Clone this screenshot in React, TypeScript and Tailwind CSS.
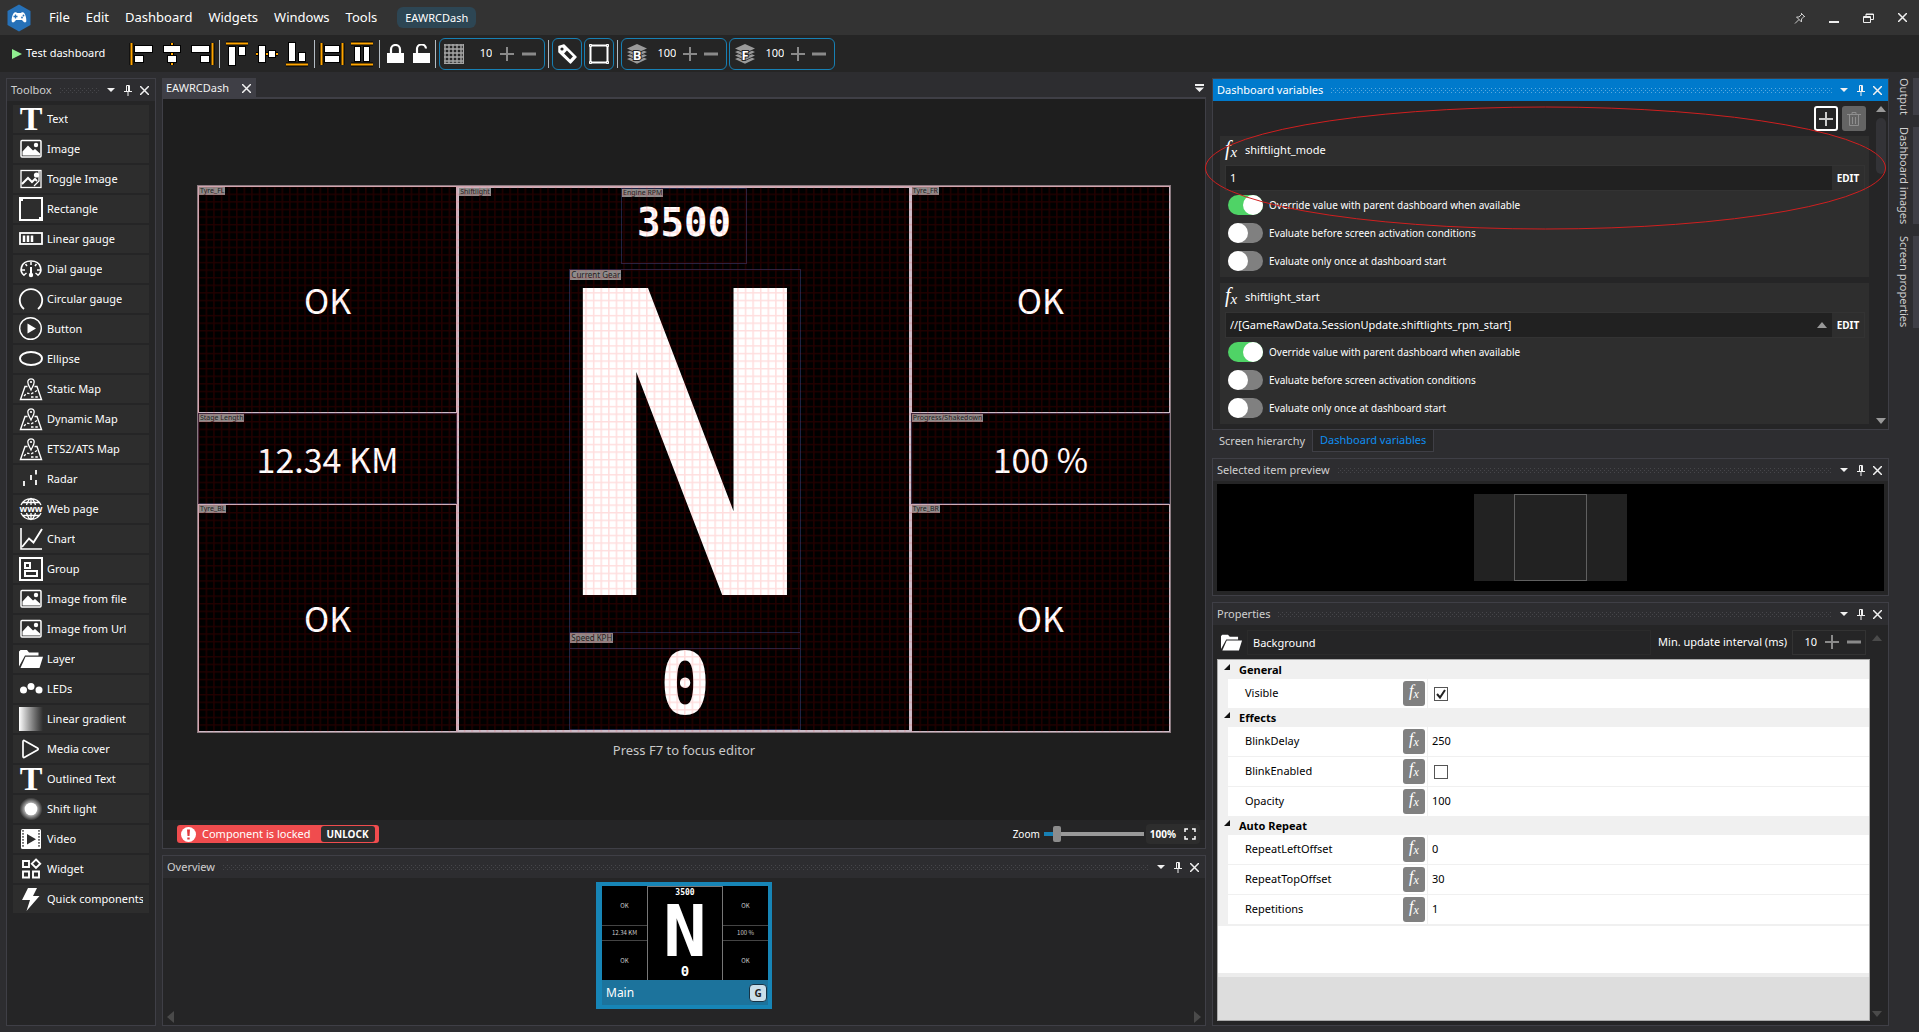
import { Fragment, ReactNode } from "react";
import clsx from "clsx";

interface IToolboxItem {
    name: string;
    icon: ReactNode;
}

interface IVariable {
    name: string;
    value: string;
    expandable?: boolean;
}

interface IProperty {
    name: string;
    value: string | boolean;
}

const MONO = "font-['DejaVu_Sans_Mono',monospace] font-bold";
const GOTHIC = "font-['Noto_Sans_CJK_JP',sans-serif]";

/* ---------- icons ---------- */

function Icon({ children, size = 24 }: { children: ReactNode; size?: number }) {
    return (
        <svg width={size} height={size} viewBox="0 0 24 24" fill="none" stroke="white" strokeWidth="2" className="shrink-0 overflow-visible" aria-hidden="true">
            {children}
        </svg>
    );
}

const LetterT = () => (
    <span className="flex size-6 shrink-0 items-center justify-center font-['Liberation_Serif',serif] text-[34px] leading-none font-bold" aria-hidden="true">T</span>
);

const ImageIcon = () => (
    <Icon>
        <rect x="2" y="3.5" width="20" height="16.5" rx="1" strokeWidth="1.5" />
        <circle cx="17" cy="8" r="2.2" fill="white" stroke="none" />
        <path d="M3.5 18.5v-4l5.5-6 5 5 2-1.5 5 4.500v2z" fill="white" stroke="none" />
    </Icon>
);

const ToggleImageIcon = () => (
    <Icon>
        <rect x="2" y="3.5" width="20" height="17" strokeWidth="1.3" />
        <circle cx="17.500" cy="8" r="2.600" fill="white" stroke="none" />
        <path d="M3 17l6-6 4 4 3-3 2 2" strokeWidth="2" />
        <path d="M20 4v10l-5 5" strokeWidth="1.300" />
    </Icon>
);

const MapIcon = () => (
    <Icon>
        <path d="M8.500 9.500H6L1.500 22.500h21L18 9.500h-2.500" strokeWidth="1.400" />
        <path d="M12 13C10 9 8.800 7.500 8.800 5a3.200 3.200 0 0 1 6.400 0c0 2.500-1.200 4-3.200 8z" strokeWidth="1.300" />
        <circle cx="12" cy="5" r="1.100" fill="white" stroke="none" />
        <path d="M5 19l3-3 4 1 7-4M12 20h7" strokeWidth="1.300" strokeDasharray="2.500 1.800" />
    </Icon>
);

const FolderIcon = ({ size = 24 }: { size?: number }) => (
    <Icon size={size}>
        <path d="M0 19.500V4.500L1.500 3H8l2 2.500h9.500V8.500H6z" fill="white" stroke="none" />
        <path d="M6.500 9.800H24L20.500 21H1.500z" fill="white" stroke="none" />
    </Icon>
);

const toolboxItems: IToolboxItem[] = [
    { name: "Text", icon: <LetterT /> },
    { name: "Image", icon: <ImageIcon /> },
    { name: "Toggle Image", icon: <ToggleImageIcon /> },
    {
        name: "Rectangle",
        icon: <Icon><rect x="1" y="1" width="22" height="22" /><path d="M2 2h2v2H2zM20 20h2v2h-2z" fill="white" stroke="none" /></Icon>,
    },
    {
        name: "Linear gauge",
        icon: <Icon><rect x="1" y="6" width="22" height="11" strokeWidth="1.800" /><path d="M5 8.500v6.500M9 8.500v6.500M13 8.500v6.500" strokeWidth="2.500" /></Icon>,
    },
    {
        name: "Dial gauge",
        icon: (
            <Icon>
                <path d="M5.500 18.500C0 15 1 4 12 4s12 11 6.500 14.500" strokeWidth="1.700" />
                <path d="M12 5v3M6.500 7l1.500 2M17.500 7L16 9M3 13h3M18 13h3M5 18l2.500-2M19 18l-2.500-2" strokeWidth="1.500" />
                <path d="M12 10v8" strokeWidth="2" />
                <circle cx="12" cy="18" r="2.200" fill="white" stroke="none" />
            </Icon>
        ),
    },
    { name: "Circular gauge", icon: <Icon><path d="M5 22A11.200 11.200 0 1 1 19 22" strokeWidth="1.800" /></Icon> },
    {
        name: "Button",
        icon: <Icon><circle cx="11.500" cy="11.500" r="10.800" strokeWidth="1.400" /><path d="M8.500 6.500l8.500 5-8.500 5z" fill="white" stroke="none" /></Icon>,
    },
    { name: "Ellipse", icon: <Icon><ellipse cx="12" cy="11.500" rx="11" ry="6.500" strokeWidth="1.900" /></Icon> },
    { name: "Static Map", icon: <MapIcon /> },
    { name: "Dynamic Map", icon: <MapIcon /> },
    { name: "ETS2/ATS Map", icon: <MapIcon /> },
    { name: "Radar", icon: <Icon><path d="M5 14v5M12 8v5M17 3v4.500M17 13v5" strokeWidth="1.800" /></Icon> },
    {
        name: "Web page",
        icon: (
            <Icon>
                <path d="M2 8A11 11 0 0 1 22 8M2 16a11 11 0 0 0 20 0M7.500 8C9 3.500 10.500 1.500 12 1.500S15 3.500 16.500 8M7.500 16c1.500 4.500 3 6.500 4.500 6.500s3-2 4.500-6.500M12 1.500V8M12 16v6.500M4 5.500h16M4 18.500h16" strokeWidth="1.300" />
                <text x="12" y="15" textAnchor="middle" fill="white" stroke="none" className="text-[9px] font-bold">www</text>
            </Icon>
        ),
    },
    { name: "Chart", icon: <Icon><path d="M2 1v21h21" strokeWidth="1.600" /><path d="M3 20l7-8.500 4.500 4L23 2" strokeWidth="1.900" /></Icon> },
    {
        name: "Group",
        icon: <Icon><rect x="1" y="1" width="22" height="22" /><rect x="6" y="6" width="5" height="5" /><rect x="6" y="14" width="12" height="5" /></Icon>,
    },
    { name: "Image from file", icon: <ImageIcon /> },
    { name: "Image from Url", icon: <ImageIcon /> },
    { name: "Layer", icon: <FolderIcon /> },
    {
        name: "LEDs",
        icon: <Icon><g fill="white" stroke="none"><circle cx="4.500" cy="13" r="3.500" /><circle cx="12" cy="9.500" r="3.500" /><circle cx="20" cy="13" r="3.500" /></g></Icon>,
    },
    { name: "Linear gradient", icon: <div className="size-6 shrink-0 bg-linear-to-r from-white to-[#2d2d2d]" /> },
    { name: "Media cover", icon: <Icon><path d="M4 4.500v15c0 1 .8 1.300 1.600.8L18.500 13c.9-.5.9-1.500 0-2L5.600 3.700C4.800 3.200 4 3.500 4 4.500z" strokeWidth="1.700" /></Icon> },
    { name: "Outlined Text", icon: <LetterT /> },
    {
        name: "Shift light",
        icon: (
            <Icon>
                <defs>
                    <radialGradient id="shift-glow">
                        <stop offset="0.5" stopColor="#bbb" />
                        <stop offset="1" stopColor="#2d2d2d" />
                    </radialGradient>
                </defs>
                <circle cx="12" cy="12" r="11.500" fill="url(#shift-glow)" stroke="none" />
                <circle cx="12" cy="12" r="6.300" fill="white" stroke="none" />
            </Icon>
        ),
    },
    {
        name: "Video",
        icon: (
            <Icon>
                <rect x="2" y="2" width="20" height="20" rx="1.500" fill="white" stroke="none" />
                <path d="M4 3v18M20 3v18" stroke="#2d2d2d" strokeWidth="1.300" strokeDasharray="1.700 1.300" />
                <path d="M8 7v10.500l9-5.200z" fill="#2d2d2d" stroke="none" />
            </Icon>
        ),
    },
    {
        name: "Widget",
        icon: <Icon><path d="M4 4h6v6H4zM4 14.500h6v6H4zM14 14.500h6v6h-6zM17 2.500l4.200 4.200L17 11l-4.200-4.300z" strokeWidth="1.900" /></Icon>,
    },
    { name: "Quick components", icon: <Icon><path d="M9 1h9l-4 8h6.500L7.500 24l3.500-11H3z" fill="white" stroke="none" /></Icon> },
];

const variables: IVariable[] = [
    { name: "shiftlight_mode", value: "1" },
    { name: "shiftlight_start", value: "//[GameRawData.SessionUpdate.shiftlights_rpm_start]", expandable: true },
];

const variableOptions = [
    "Override value with parent dashboard when available",
    "Evaluate before screen activation conditions",
    "Evaluate only once at dashboard start",
];

const propertyGroups: { category: string; items: IProperty[] }[] = [
    { category: "General", items: [{ name: "Visible", value: true }] },
    {
        category: "Effects",
        items: [
            { name: "BlinkDelay", value: "250" },
            { name: "BlinkEnabled", value: false },
            { name: "Opacity", value: "100" },
        ],
    },
    {
        category: "Auto Repeat",
        items: [
            { name: "RepeatLeftOffset", value: "0" },
            { name: "RepeatTopOffset", value: "30" },
            { name: "Repetitions", value: "1" },
        ],
    },
];

function FxGlyph({ className }: { className?: string }) {
    return (
        <span className={clsx("font-['Liberation_Serif',serif] italic leading-none whitespace-nowrap", className)}>
            f<span className="relative top-[2px] text-[75%]">x</span>
        </span>
    );
}

function Grip({ className }: { className?: string }) {
    return (
        <svg className={clsx("h-[5px] min-w-0 flex-1", className)} aria-hidden="true">
            <line x1="0" y1="0.5" x2="100%" y2="0.5" stroke="currentColor" strokeDasharray="1 3" />
            <line x1="2" y1="2.5" x2="100%" y2="2.5" stroke="currentColor" strokeDasharray="1 3" />
            <line x1="0" y1="4.5" x2="100%" y2="4.5" stroke="currentColor" strokeDasharray="1 3" />
        </svg>
    );
}

function CloseGlyph() {
    return <svg width="9" height="9" stroke="#f1f1f1" strokeWidth="1.500"><path d="M0 0l9 9M9 0L0 9" /></svg>;
}

function PanelHeader({ title, active }: { title: string; active?: boolean }) {
    return (
        <div className={clsx("flex h-[22px] shrink-0 items-center pr-[3px] pl-1", active ? "bg-[#007acc] text-white" : "bg-[#2d2d30] text-[#d0d0d0]")}>
            <h2 className="mr-2 text-[11px] leading-4 whitespace-nowrap">{title}</h2>
            <Grip className={active ? "text-[#59a8de]" : "text-[#46464a]"} />
            <button aria-label="Window position" className="ml-1 flex w-4 justify-center">
                <svg width="8" height="4"><path d="M0 0h8L4 4z" fill="#f1f1f1" /></svg>
            </button>
            <button aria-label="Auto hide" className="flex w-[18px] justify-center">
                <svg width="8" height="11" fill="none" stroke="#f1f1f1"><path d="M2.500 6V.5h3V6M0 6.500h8M4.500 1v5M4 7v4" /></svg>
            </button>
            <button aria-label="Close" className="flex w-[15px] justify-center">
                <CloseGlyph />
            </button>
        </div>
    );
}

/* ---------- title bar and toolbar ---------- */

function TitleBar() {
    return (
        <header className="flex h-[35px] shrink-0 items-center bg-[#333333] pl-[7px]">
            <svg width="24" height="28" viewBox="0 0 24 28" aria-hidden="true">
                <path d="M12 0.500L23.500 7v14L12 27.500 0.500 21V7z" fill="#2671b8" />
                <path d="M7.500 8.500c1-.6 2-.4 2.800.5h3.400c.8-.9 1.800-1.100 2.800-.5 1.700 1 3 5.500 2.800 8.500-.1 2-2.200 1.800-3.300.3l-1-1.300H9l-1 1.300c-1.100 1.500-3.200 1.700-3.300-.3-.2-3 1.100-7.500 2.800-8.500z" fill="white" />
                <path d="M8.500 10.500v4M6.500 12.500h4" stroke="#2671b8" strokeWidth="1.300" />
                <circle cx="15" cy="13.500" r="0.900" fill="#2671b8" />
                <circle cx="16.500" cy="11.500" r="0.900" fill="#2671b8" />
            </svg>
            <nav className="ml-[18px] flex items-center gap-4 text-[13px] text-white">
                {["File", "Edit", "Dashboard", "Widgets", "Windows", "Tools"].map((item) => (
                    <button key={item}>{item}</button>
                ))}
            </nav>
            <span className="ml-5 rounded-md bg-[#2d4654] px-2 py-[2px] text-[11px] leading-[17px] text-white">EAWRCDash</span>
            <div className="ml-auto flex items-center">
                <button aria-label="Pin window" className="flex w-[34px] justify-center">
                    <svg width="12" height="12" fill="none" stroke="#ccc"><path d="M7 1l4 4M8 2L5 5H2.500l5 5V7l3-3M5 7.500L1 11.500" /></svg>
                </button>
                <button aria-label="Minimize" className="flex w-[34px] justify-center">
                    <svg width="10" height="10"><path d="M0 8h10v2H0z" fill="#eee" /></svg>
                </button>
                <button aria-label="Restore" className="flex w-[34px] justify-center">
                    <svg width="11" height="10" fill="none" stroke="#eee"><path d="M3 3V1h7.500v5.500H8M.5 3.500h7v6h-7zM3 1.500h7M.5 4.500h7" /></svg>
                </button>
                <button aria-label="Close window" className="flex w-[34px] justify-center"><CloseGlyph /></button>
            </div>
        </header>
    );
}

function AlignIcon({ guides, blocks }: { guides: string; blocks: string }) {
    return (
        <svg width="26" height="26" viewBox="0 0 26 26" aria-hidden="true">
            <path d={guides} stroke="black" strokeWidth="4" />
            <path d={guides} stroke="#ffa500" strokeWidth="2" />
            <path d={blocks} fill="white" stroke="black" strokeWidth="2" paintOrder="stroke" />
        </svg>
    );
}

const alignGroups = [
    [
        { label: "Align left", guides: "M2.500 2v22", blocks: "M6 5h17v6H6zM6 15h8v6H6z" },
        { label: "Align center", guides: "M13 2v22", blocks: "M5 5h16v6H5zM9 15h8v6H9z" },
        { label: "Align right", guides: "M23.500 2v22", blocks: "M3 5h17v6H3zM12 15h8v6h-8z" },
    ],
    [
        { label: "Align top", guides: "M2 2.500h22", blocks: "M5 6h6v18H5zM15 6h6v8h-6z" },
        { label: "Align middle", guides: "M2 13h22", blocks: "M5 5h6v16H5zM15 10h6v6h-6z" },
        { label: "Align bottom", guides: "M2 23.500h22", blocks: "M5 2h6v18H5zM15 12h6v8h-6z" },
    ],
    [
        { label: "Distribute horizontally", guides: "M2.500 2v22M23.500 2v22", blocks: "M6 5h14v6H6zM6 15h14v6H6z" },
        { label: "Distribute vertically", guides: "M2 2.500h22M2 23.500h22", blocks: "M6 6h5v14H6zM15 6h5v14h-5z" },
    ],
];

function Separator() {
    return <div className="h-7 w-px shrink-0 bg-[#b4bcc4]" />;
}

function Stepper({ value, label, tight }: { value: string; label: string; tight?: boolean }) {
    return (
        <div className={clsx("flex items-center", tight ? "gap-2" : "gap-[7px]")}>
            <input aria-label={label} defaultValue={value} className="w-[22px] bg-transparent text-right text-[11px] text-white outline-none" />
            <button aria-label={`Increase ${label}`}>
                <svg width="14" height="14"><path d="M7 0v14M0 7h14" stroke="#8a8a8a" strokeWidth="2" /></svg>
            </button>
            <button aria-label={`Decrease ${label}`}>
                <svg width="14" height="14"><path d="M0 7h14" stroke="#8a8a8a" strokeWidth="3" /></svg>
            </button>
        </div>
    );
}

function LayersIcon({ letter }: { letter: string }) {
    return (
        <svg width="22" height="22" viewBox="0 0 22 22" fill="#9a9a9a" aria-hidden="true">
            <path d="M11 1l10 4.500L11 10 1 5.500z" />
            <path d="M1 9l3-1.200 7 3.200 7-3.200L21 9l-10 4.800zM1 12.500l3-1.200 7 3.200 7-3.200 3 1.200-10 4.800zM1 16l3-1.200 7 3.200 7-3.200 3 1.200-10 4.800z" />
            <text x="11" y="17" textAnchor="middle" fill="white" stroke="#252526" strokeWidth="2" paintOrder="stroke" className="text-[13px] font-bold">{letter}</text>
        </svg>
    );
}

function Toolbar() {
    const group = "flex h-8 items-center rounded-md border border-[#1780b4]";
    return (
        <div className="flex h-[37px] shrink-0 items-center bg-[#252525] pl-3">
            <button className="mr-5 flex items-center gap-1 text-[11px] whitespace-nowrap text-white">
                <svg width="10" height="10"><path d="M0 0l10 5-10 5z" fill="#90ee90" /></svg>
                Test dashboard
            </button>
            {alignGroups.map((buttons, idx) => (
                <Fragment key={`align-${idx}`}>
                    <div className="flex gap-1 px-1">
                        {buttons.map((button) => (
                            <button key={button.label} aria-label={button.label}>
                                <AlignIcon guides={button.guides} blocks={button.blocks} />
                            </button>
                        ))}
                    </div>
                    <Separator />
                </Fragment>
            ))}
            <div className="flex gap-[9px] pr-[5px] pl-[7px]">
                <button aria-label="Lock">
                    <svg width="17" height="20"><path d="M4 9V5.500a4.500 4.500 0 0 1 9 0V9" fill="none" stroke="white" strokeWidth="2.200" /><path d="M0 9h17v10H0z" fill="white" /></svg>
                </button>
                <button aria-label="Unlock">
                    <svg width="17" height="20"><path d="M4 9V5.500a4.500 4.500 0 0 1 9-1" fill="none" stroke="white" strokeWidth="2.200" /><path d="M0 9h17v10H0z" fill="white" /></svg>
                </button>
            </div>
            <Separator />
            <div className={clsx(group, "mr-[3px] ml-[3px] gap-[6px] pr-2 pl-1")}>
                <svg width="20" height="20" aria-hidden="true">
                    <path d="M0 1h20M0 5h20M0 9h20M0 13h20M0 17h20M1 0v20M5 0v20M9 0v20M13 0v20M17 0v20M19.500 0v20M0 19.500h20" stroke="#a6a6a6" strokeWidth="1.400" />
                </svg>
                <Stepper value="10" label="grid size" tight />
            </div>
            <Separator />
            <button aria-label="Show labels" className={clsx(group, "mr-[2px] ml-[3px] w-[30px] justify-center")}>
                <svg width="20" height="20"><path d="M2 8V2.500L7 1l12 12-5.500 6z" fill="white" stroke="white" strokeWidth="1.500" strokeLinejoin="round" /><circle cx="5" cy="5" r="1.600" fill="#252525" /><path d="M8.500 8l6 6" stroke="#252525" strokeWidth="4" /></svg>
            </button>
            <button aria-label="Show borders" className={clsx(group, "mr-[3px] w-[30px] justify-center")}>
                <svg width="20" height="20" fill="none" stroke="white"><path d="M1.500 1.500h17v17h-17z" strokeWidth="2" /><path d="M.5.5h2v2h-2zM17.500.5h2v2h-2zM.5 17.500h2v2h-2zM17.500 17.500h2v2h-2z" fill="#888" /></svg>
            </button>
            <Separator />
            <div className={clsx(group, "mr-[2px] ml-[3px] gap-[6px] pr-2 pl-1")}>
                <LayersIcon letter="B" />
                <Stepper value="100" label="background opacity" />
            </div>
            <div className={clsx(group, "gap-[6px] pr-2 pl-1")}>
                <LayersIcon letter="F" />
                <Stepper value="100" label="foreground opacity" />
            </div>
        </div>
    );
}

/* ---------- left column ---------- */

function Toolbox() {
    return (
        <aside className="flex w-[150px] shrink-0 flex-col border border-[#3f3f46] bg-[#252526]">
            <PanelHeader title="Toolbox" />
            <ul className="flex flex-col gap-[2px] px-[6px] pt-1">
                {toolboxItems.map((item) => (
                    <li key={item.name}>
                        <button className="flex h-7 w-full items-center gap-1 bg-[#2d2d2d] pr-[6px] pl-[6px] text-[11px] text-white">
                            {item.icon}
                            <span className="overflow-hidden whitespace-nowrap">{item.name}</span>
                        </button>
                    </li>
                ))}
            </ul>
        </aside>
    );
}

/* ---------- editor ---------- */

function WidgetLabel({ children, large }: { children: string; large?: boolean }) {
    return (
        <span className={clsx("absolute top-0 left-0 bg-[#8c8c8c] px-[1px] whitespace-nowrap text-[#222]", large ? "text-[8px] leading-[10px]" : "text-[7px] leading-[8px]")}>
            {children}
        </span>
    );
}

function SideColumn({ cells }: { cells: { label: string; text: string }[] }) {
    return (
        <div className="grid grid-rows-[5fr_2fr_5fr]">
            {cells.map((cell, idx) => (
                <div
                    key={cell.label}
                    className={clsx("relative flex items-center justify-center", idx === 1 ? "border border-[#2c2c44]" : "border border-[#cbbcc8]")}
                >
                    <WidgetLabel>{cell.label}</WidgetLabel>
                    <span className={clsx(GOTHIC, "text-[34px] leading-none text-white")}>{cell.text}</span>
                </div>
            ))}
        </div>
    );
}

function DashCanvas() {
    return (
        <div className="relative mx-[34px] grid aspect-video grid-cols-[4fr_7fr_4fr] border border-[#8a7a80] bg-black">
            <SideColumn
                cells={[
                    { label: "Tyre_FL", text: "OK" },
                    { label: "Stage Length", text: "12.34 KM" },
                    { label: "Tyre_BL", text: "OK" },
                ]}
            />
            <div className="relative border-2 border-[#cbbcc8]">
                <WidgetLabel>Shiftlight</WidgetLabel>
                <div className="absolute top-0 left-[36%] flex h-[14%] w-[28%] items-center justify-center border border-[#1c2444] pb-[6px]">
                    <WidgetLabel>Engine RPM</WidgetLabel>
                    <span className={clsx(MONO, "text-[39px] leading-none text-white")}>3500</span>
                </div>
                <div className="absolute top-[15%] left-[24.5%] flex h-[70%] w-[51.5%] items-center justify-center border border-[#1c2444] pb-[18px]">
                    <WidgetLabel large>Current Gear</WidgetLabel>
                    <span className={clsx(MONO, "text-[421px] leading-none text-white")}>N</span>
                </div>
                <div className="absolute bottom-0 left-[24.5%] flex h-[18%] w-[51.5%] items-center justify-center border border-[#1c2444] pt-[6px]">
                    <WidgetLabel large>Speed KPH</WidgetLabel>
                    <span className={clsx(MONO, "text-[85px] leading-none text-white")}>0</span>
                </div>
            </div>
            <SideColumn
                cells={[
                    { label: "Tyre_FR", text: "OK" },
                    { label: "Progress/Shakedown", text: "100 %" },
                    { label: "Tyre_BR", text: "OK" },
                ]}
            />
            <svg viewBox="0 0 1280 720" preserveAspectRatio="none" className="pointer-events-none absolute inset-0 size-full" aria-hidden="true">
                <defs>
                    <pattern id="grid" width="10" height="10" patternUnits="userSpaceOnUse">
                        <path d="M0 0h10v2H2v8H0z" fill="red" fillOpacity="0.13" />
                    </pattern>
                </defs>
                <rect width="1280" height="720" fill="url(#grid)" />
            </svg>
        </div>
    );
}

function Editor() {
    return (
        <section className="flex min-h-0 flex-1 flex-col">
            <div className="flex h-[19px] shrink-0 items-center">
                <div className="flex h-full items-center gap-[13px] bg-[#3f3f46] pt-[2px] pr-[5px] pl-1 text-[11px] text-[#f1f1f1]">
                    EAWRCDash
                    <button aria-label="Close document"><CloseGlyph /></button>
                </div>
                <button aria-label="Open documents" className="mr-[2px] ml-auto">
                    <svg width="9" height="8"><path d="M0 0h9v2H0zM0 3.500h9L4.500 8z" fill="#f1f1f1" /></svg>
                </button>
            </div>
            <div className="flex min-h-0 flex-1 flex-col border border-t-2 border-[#3f3f46] bg-[#1e1e1e]">
                <div className="flex min-h-0 flex-1 flex-col pt-[86px]">
                    <DashCanvas />
                    <p className="mt-2 text-center text-[13px] text-[#c8c8c8]">Press F7 to focus editor</p>
                </div>
                <div className="flex h-7 shrink-0 items-center bg-[#252526] pr-[5px] pl-[14px]">
                    <div className="flex h-[18px] items-center rounded-[3px] bg-[#f04c4e] px-1 text-white">
                        <svg width="15" height="15" aria-hidden="true"><circle cx="7.500" cy="7.500" r="7.500" fill="white" /><path d="M6 2.500h3L8.500 9h-2zM6.300 10.500h2.400v2H6.300z" fill="#e03c3e" /></svg>
                        <span className="ml-[6px] text-[11px]">Component is locked</span>
                        <button className="ml-[10px] h-4 rounded-[3px] bg-[#2d2d2d] px-[6px] text-[10px] leading-4 font-bold">UNLOCK</button>
                    </div>
                    <label htmlFor="zoom" className="mr-1 ml-auto text-[10px] text-white">Zoom</label>
                    <input
                        id="zoom"
                        type="range"
                        defaultValue={10}
                        className="h-4 w-[100px] appearance-none bg-[linear-gradient(to_right,#1780b4_10%,#999_10%)] bg-[length:100%_4px] bg-center bg-no-repeat [&::-webkit-slider-thumb]:h-4 [&::-webkit-slider-thumb]:w-2 [&::-webkit-slider-thumb]:appearance-none [&::-webkit-slider-thumb]:rounded-[2px] [&::-webkit-slider-thumb]:bg-[#8c8c8c]"
                    />
                    <div className="ml-[2px] flex h-5 items-center rounded-sm bg-[#2d2d2d] px-1">
                        <button className="text-[10px] font-bold text-white">100%</button>
                        <button aria-label="Fit to window" className="ml-2">
                            <svg width="12" height="12" fill="none" stroke="white" strokeWidth="1.500"><path d="M1 4V1h3M8 1h3v3M11 8v3H8M4 11H1V8" /></svg>
                        </button>
                    </div>
                </div>
            </div>
        </section>
    );
}

function ThumbColumn({ middle }: { middle: string }) {
    return (
        <div className={clsx(GOTHIC, "grid grid-rows-[5fr_2fr_5fr] text-[6px] text-[#ccc] *:flex *:items-center *:justify-center")}>
            <div>OK</div>
            <div className="border-y border-[#444]">{middle}</div>
            <div>OK</div>
        </div>
    );
}

function Overview() {
    return (
        <section className="flex h-[171px] shrink-0 flex-col border border-[#3f3f46] bg-[#252526]">
            <PanelHeader title="Overview" />
            <div className="flex flex-1 items-end justify-between px-1 pt-1">
                <svg width="8" height="12" className="mb-[2px] self-end" aria-hidden="true"><path d="M7 0v12L0 6z" fill="#4a4a4a" /></svg>
                <button className="w-[176px] self-start bg-[#1785b6] py-1 pr-1 pl-[6px]">
                    <div className="grid h-[94px] grid-cols-[45fr_76fr_45fr] bg-black">
                        <ThumbColumn middle="12.34 KM" />
                        <div className={clsx(MONO, "flex flex-col items-center justify-between border-x border-t border-[#777] py-[2px] text-white")}>
                            <span className="text-[8px] leading-[8px]">3500</span>
                            <span className="text-[72px] leading-[64px]">N</span>
                            <span className="text-[14px] leading-[14px]">0</span>
                        </div>
                        <ThumbColumn middle="100 %" />
                    </div>
                    <div className="flex h-[25px] items-center justify-between bg-[#1c739c] pr-px pl-1 text-[12px] text-white">
                        Main
                        <span className="w-[18px] rounded-[4px] border border-[#163447] bg-[#c9dfea] text-[10px] leading-[16px] font-bold text-[#222]">G</span>
                    </div>
                </button>
                <svg width="8" height="12" className="mb-[2px] self-end" aria-hidden="true"><path d="M1 0v12l7-6z" fill="#4a4a4a" /></svg>
            </div>
        </section>
    );
}

/* ---------- right column ---------- */

function Toggle({ label, checked }: { label: string; checked: boolean }) {
    return (
        <label className="flex h-5 items-center gap-[6px] text-[10px] text-white">
            <input type="checkbox" role="switch" defaultChecked={checked} className="peer sr-only" />
            <span className="flex h-5 w-[35px] rounded-full bg-[#808080] peer-checked:justify-end peer-checked:bg-[#4fd366]">
                <span className="size-5 rounded-full bg-white" />
            </span>
            {label}
        </label>
    );
}

function VariableCard({ variable }: { variable: IVariable }) {
    return (
        <div className="bg-[#2e2e2e] pr-1 pb-[6px] pl-[5px]">
            <div className="flex h-[29px] items-center gap-1 text-[11px] text-white">
                <FxGlyph className="w-4 pb-[6px] text-[20px]" />
                {variable.name}
            </div>
            <div className="flex h-[26px] border border-[#333]">
                <input aria-label={variable.name} defaultValue={variable.value} className="min-w-0 flex-1 bg-[#212121] pl-1 text-[11px] text-white outline-none" />
                {variable.expandable && (
                    <span className="flex items-center bg-[#212121] pr-[5px]">
                        <svg width="10" height="6"><path d="M5 0l5 6H0z" fill="#999" /></svg>
                    </span>
                )}
                <button className="w-8 text-[10px] font-bold text-white">EDIT</button>
            </div>
            <div className="mt-1 flex flex-col gap-2 pl-[3px]">
                {variableOptions.map((option, idx) => (
                    <Toggle key={option} label={option} checked={idx === 0} />
                ))}
            </div>
        </div>
    );
}

function ScrollRail({ thumb, color }: { thumb?: boolean; color: string }) {
    return (
        <div className={clsx("flex w-[10px] flex-col items-center", color)} aria-hidden="true">
            <svg width="10" height="6" fill="currentColor"><path d="M5 0l5 6H0z" /></svg>
            {thumb && <div className="mt-[6px] h-14 w-[10px] rounded-full bg-[#333337]" />}
            <svg width="10" height="6" fill="currentColor" className="mt-auto"><path d="M5 6l5-6H0z" /></svg>
        </div>
    );
}

function DashboardVariables() {
    return (
        <section className="relative shrink-0">
            <div className="border border-[#3f3f46] bg-[#252526]">
                <PanelHeader title="Dashboard variables" active />
                <div className="flex gap-[7px] pr-[2px] pl-[7px]">
                    <div className="min-w-0 flex-1 pb-[5px]">
                        <div className="flex h-[35px] justify-end gap-1 pt-[5px] pr-[3px]">
                            <button aria-label="Add variable" className="flex h-[25px] w-6 items-center justify-center rounded-[3px] border-2 border-white">
                                <svg width="14" height="14"><path d="M7 0v14M0 7h14" stroke="#ccc" strokeWidth="2" /></svg>
                            </button>
                            <button aria-label="Delete variable" className="flex h-[25px] w-6 items-center justify-center rounded-[3px] bg-[#646464]">
                                <svg width="14" height="14" fill="none" stroke="#8e8e8e"><path d="M0 2.500h14M5 2V.5h4V2M2.500 3v10.500h9V3M5.500 5v7M8.500 5v7" /></svg>
                            </button>
                        </div>
                        <div className="flex flex-col gap-[6px]">
                            {variables.map((variable) => (
                                <VariableCard key={variable.name} variable={variable} />
                            ))}
                        </div>
                    </div>
                    <div className="flex py-[5px]">
                        <ScrollRail thumb color="text-[#999]" />
                    </div>
                </div>
            </div>
            <div className="flex h-[22px] text-[11px]">
                <button className="px-[7px] text-[#d0d0d0]">Screen hierarchy</button>
                <button className="border border-t-0 border-[#3f3f46] bg-[#252526] px-[7px] text-[#0e8ef0]">Dashboard variables</button>
            </div>
            <svg className="pointer-events-none absolute top-[28px] -left-2 h-[124px] w-[683px]" aria-hidden="true">
                <ellipse cx="50%" cy="50%" rx="340" ry="61" fill="none" stroke="#d01f1f" />
            </svg>
        </section>
    );
}

function SelectedPreview() {
    return (
        <section className="mt-[6px] shrink-0 border border-[#3f3f46] bg-[#252526]">
            <PanelHeader title="Selected item preview" />
            <div className="m-1 mt-[3px] flex h-[107px] items-center justify-center bg-black">
                <div className="flex h-[87px] w-[153px] justify-center bg-[#222222]">
                    <div className="w-[73px] border border-[#606060]" />
                </div>
            </div>
        </section>
    );
}

function PropertyRow({ property, last }: { property: IProperty; last: boolean }) {
    const { name, value } = property;
    return (
        <tr className={clsx(last ? "h-[29px]" : "h-[30px]")}>
            <td className="bg-[#f0f0f0]" />
            <th scope="row" className={clsx("bg-white pl-[17px] text-left font-normal", !last && "border-b border-[#f0f0f0]")}>{name}</th>
            <td className={clsx("border-r border-[#f0f0f0] bg-white", !last && "border-b")}>
                <button aria-label={`${name} formula`} className="block h-[25px] w-[22px] rounded-[3px] bg-[#808080] pb-1 text-white">
                    <FxGlyph className="text-[16px]" />
                </button>
            </td>
            <td className={clsx("bg-white pl-1", !last && "border-b border-[#f0f0f0]")}>
                {typeof value === "boolean" ? (
                    <span className="relative ml-[2px] flex size-[14px]">
                        <input
                            type="checkbox"
                            aria-label={name}
                            defaultChecked={value}
                            className="peer size-[14px] appearance-none border border-[#555] bg-white"
                        />
                        <svg width="14" height="14" className="pointer-events-none absolute inset-0 hidden peer-checked:block" aria-hidden="true">
                            <path d="M3 7l3 3.500L11 3" fill="none" stroke="#222" strokeWidth="2" />
                        </svg>
                    </span>
                ) : (
                    <input aria-label={name} defaultValue={value} className="w-full bg-transparent outline-none" />
                )}
            </td>
        </tr>
    );
}

function Properties() {
    return (
        <section className="mt-[6px] flex min-h-0 flex-1 flex-col border border-[#3f3f46] bg-[#252526]">
            <PanelHeader title="Properties" />
            <div className="flex min-h-0 flex-1 gap-[2px] pr-[6px] pb-1 pl-1">
                <div className="flex min-w-0 flex-1 flex-col">
                    <div className="flex h-[34px] shrink-0 items-center gap-[5px] px-1 text-[11px] text-white">
                        <FolderIcon size={21} />
                        <input aria-label="Item name" defaultValue="Background" className="h-[25px] min-w-0 flex-1 border border-[#2b2b2b] bg-transparent pl-[5px] outline-none" />
                        <span className="pl-[2px] whitespace-nowrap">Min. update interval (ms)</span>
                        <div className="flex h-[25px] w-[74px] items-center justify-end border border-[#333] pr-1">
                            <Stepper value="10" label="update interval" tight />
                        </div>
                    </div>
                    <div className="flex min-h-0 flex-1 flex-col border border-[#aaa] bg-white text-[11px] text-black">
                        <table className="w-full table-fixed border-separate border-spacing-0">
                            <colgroup>
                                <col className="w-[10px]" />
                                <col className="w-[175px]" />
                                <col className="w-[25px]" />
                                <col />
                            </colgroup>
                            <tbody>
                                {propertyGroups.map((group) => (
                                    <Fragment key={group.category}>
                                        <tr className="h-[19px] bg-[#f0f0f0]">
                                            <td className="align-top">
                                                <svg width="6" height="6" className="mt-1 ml-[6px] overflow-visible"><path d="M6 0v6H0z" fill="#111" /></svg>
                                            </td>
                                            <th scope="rowgroup" colSpan={3} className="pl-[11px] text-left text-[11px] leading-4 font-bold">{group.category}</th>
                                        </tr>
                                        {group.items.map((property, idx) => (
                                            <PropertyRow key={property.name} property={property} last={idx === group.items.length - 1} />
                                        ))}
                                    </Fragment>
                                ))}
                            </tbody>
                        </table>
                        <div className="flex-1 border-t-2 border-[#f0f0f0]" />
                        <div className="h-[47px] shrink-0 border-t-4 border-[#ececec] bg-[#dddddd]" />
                    </div>
                </div>
                <div className="flex pt-[10px] pb-1">
                    <ScrollRail color="text-[#4a4a4a]" />
                </div>
            </div>
        </section>
    );
}

function SideTabs() {
    return (
        <div className="ml-[6px] flex w-6 shrink-0 flex-col gap-3 text-[11px] leading-[18px] text-[#d0d0d0]">
            {["Output", "Dashboard images", "Screen properties"].map((tab) => (
                <button key={tab} className="border-r-[6px] border-[#3f3f46] text-left [writing-mode:vertical-rl]">{tab}</button>
            ))}
        </div>
    );
}

export default function App() {
    return (
        <div className="flex h-screen min-h-[1032px] flex-col overflow-hidden bg-[#2d2d30] font-['Noto_Sans',sans-serif]">
            <TitleBar />
            <Toolbar />
            <main className="flex min-h-0 flex-1 pt-[6px] pb-[6px] pl-[6px]">
                <Toolbox />
                <div className="ml-[6px] flex min-w-0 flex-1 flex-col gap-[6px]">
                    <Editor />
                    <Overview />
                </div>
                <div className="ml-[6px] flex w-[677px] shrink-0 flex-col">
                    <DashboardVariables />
                    <SelectedPreview />
                    <Properties />
                </div>
                <SideTabs />
            </main>
        </div>
    );
}
